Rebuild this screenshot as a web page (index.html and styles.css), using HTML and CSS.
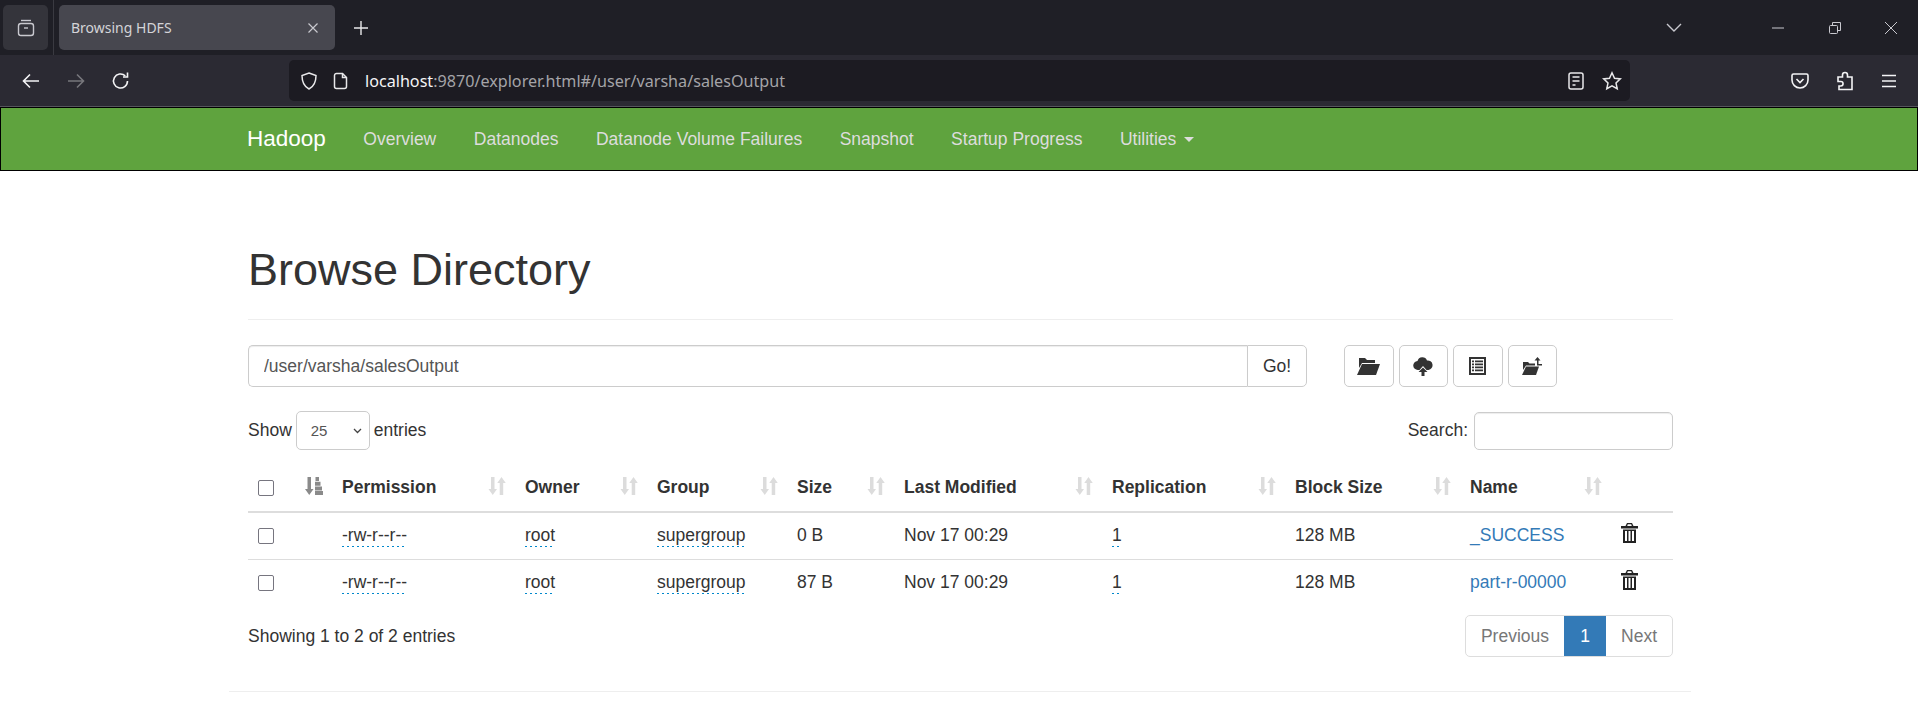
FILE: index.html
```html
<!DOCTYPE html>
<html lang="en">
<head>
<meta charset="UTF-8">
<title>Browsing HDFS</title>
<link rel="stylesheet" href="styles.css">
</head>
<body>
<div class="tabbar">
  <div class="view-btn">
    <svg width="20" height="20" viewBox="0 0 20 20" fill="none" stroke="#c9c9cf" stroke-width="1.4"><path d="M5 2.500h10"/><rect x="2.500" y="5.500" width="15" height="12" rx="2.500"/><path d="M8 10h4"/></svg>
  </div>
  <div class="tab-sep"></div>
  <div class="tab">
    <span class="tab-title">Browsing HDFS</span>
    <svg width="12" height="12" viewBox="0 0 12 12" stroke="#c9c9cf" stroke-width="1.2"><path d="M1.500 1.500l9 9M10.500 1.500l-9 9"/></svg>
  </div>
  <svg class="new-tab" width="16" height="16" viewBox="0 0 16 16" stroke="#e8e8ea" stroke-width="1.4"><path d="M8 1v14M1 8h14"/></svg>
  <svg class="tab-list" width="16" height="10" viewBox="0 0 16 10" fill="none" stroke="#c9c9cf" stroke-width="1.4"><path d="M1 1l7 7 7-7"/></svg>
  <div class="win-btns">
    <svg width="14" height="14" viewBox="0 0 14 14" stroke="#c9c9cf"><path d="M1 7h12"/></svg>
    <svg width="14" height="14" viewBox="0 0 14 14" fill="none" stroke="#c9c9cf"><rect x="1.500" y="4.500" width="8" height="8" rx="1"/><path d="M4.500 4.500v-3h8v8h-3"/></svg>
    <svg width="14" height="14" viewBox="0 0 14 14" stroke="#c9c9cf"><path d="M1 1l12 12M13 1L1 13"/></svg>
  </div>
</div>

<div class="toolbar">
  <div class="nav-btns">
    <svg width="20" height="20" viewBox="0 0 20 20" fill="none" stroke="#f4f4f6" stroke-width="1.6"><path d="M18 10H3M9 3.500L2.500 10 9 16.500"/></svg>
    <svg width="20" height="20" viewBox="0 0 20 20" fill="none" stroke="#77777c" stroke-width="1.6"><path d="M2 10h15M11 3.500l6.500 6.500-6.500 6.500"/></svg>
    <svg width="20" height="20" viewBox="0 0 20 20" fill="none" stroke="#f4f4f6" stroke-width="1.6"><path d="M16.500 10a7 7 0 1 1-2.200-5.100"/><path d="M16.500 1.500v4.500H12"/></svg>
  </div>
  <div class="urlbar">
    <svg width="20" height="20" viewBox="0 0 20 20" fill="none" stroke="#e8e8ea" stroke-width="1.500"><path d="M10 2l7 2.500c0 6.500-2 11-7 13.500C5 15.500 3 11 3 4.500z"/></svg>
    <svg width="16" height="18" viewBox="0 0 16 18" fill="none" stroke="#e8e8ea" stroke-width="1.500"><path d="M3.500 1.500h6l4 4v9a2 2 0 0 1-2 2h-8a2 2 0 0 1-2-2v-11a2 2 0 0 1 2-2z"/><path d="M9.500 1.500v4h4"/></svg>
    <span class="url"><b>localhost</b>:9870/explorer.html#/user/varsha/salesOutput</span>
    <svg width="18" height="20" viewBox="0 0 18 20" fill="none" stroke="#e8e8ea" stroke-width="1.500"><rect x="2" y="2" width="14" height="16" rx="2"/><path d="M5.500 6h7M5.500 10h7M5.500 14h3"/></svg>
    <svg class="star" width="20" height="20" viewBox="0 0 20 20" fill="none" stroke="#e8e8ea" stroke-width="1.500"><path d="M10 1.800l2.500 5.400 5.800.7-4.300 4 1.200 5.800-5.200-2.900-5.200 2.900 1.200-5.800-4.300-4 5.800-.7z"/></svg>
  </div>
  <div class="ext-btns">
    <svg width="20" height="20" viewBox="0 0 20 20" fill="none" stroke="#f4f4f6" stroke-width="1.600"><path d="M3.500 3h13A1.500 1.500 0 0 1 18 4.500V9a8 8 0 0 1-16 0V4.500A1.500 1.500 0 0 1 3.500 3z"/><path d="M6.500 8l3.500 3.500L13.500 8"/></svg>
    <svg width="20" height="20" viewBox="0 0 20 20" fill="none" stroke="#f4f4f6" stroke-width="1.600"><path d="M3 6h4.500V4a2.500 2.500 0 0 1 5 0v2H17v12.500H4V15h1.800a2.200 2.200 0 0 0 0-4.500H3z"/></svg>
    <svg width="20" height="20" viewBox="0 0 20 20" stroke="#f4f4f6" stroke-width="1.600"><path d="M3 4.500h14M3 10h14M3 15.500h14"/></svg>
  </div>
</div>

<nav class="navbar">
  <a class="brand" href="#">Hadoop</a>
  <a href="#">Overview</a>
  <a href="#">Datanodes</a>
  <a href="#">Datanode Volume Failures</a>
  <a href="#">Snapshot</a>
  <a href="#">Startup Progress</a>
  <a href="#">Utilities <span class="caret"></span></a>
</nav>

<div class="container">
  <div class="page-header">
    <h1>Browse Directory</h1>
  </div>

  <div class="path-row">
    <div class="input-group">
      <input type="text" class="path-input" value="/user/varsha/salesOutput">
      <button class="btn go-btn">Go!</button>
    </div>
    <div class="tool-btns">
      <button class="btn icon-btn"><svg width="23" height="18" viewBox="0 0 23 18" fill="#333"><path d="M2 1h6l2 2h8v3H5L2 11z"/><path d="M5 7h18l-4 11H0z"/></svg></button>
      <button class="btn icon-btn"><svg width="20" height="19" viewBox="0 0 20 19" fill="#333"><path d="M6.500 13H5a4.500 4.500 0 0 1-.5-9A5 5 0 0 1 14 3.500 4.800 4.800 0 0 1 15.500 13h-2L10 9z"/><path d="M10 10.500l4.500 4.500h-3v4h-3v-4h-3z"/></svg></button>
      <button class="btn icon-btn"><svg width="17" height="18" viewBox="0 0 17 18" fill="#333"><path fill-rule="evenodd" d="M0 0h17v18H0zM2 2v14h13V2zM3 3.500h2v1.700H3zM6 3.500h8v1.700H6zM3 6.500h2v1.700H3zM6 6.500h8v1.700H6zM3 9.500h2v1.700H3zM6 9.500h8v1.700H6zM3 12.500h2v1.700H3zM6 12.500h8v1.700H6z"/></svg></button>
      <button class="btn icon-btn"><svg width="20" height="18" viewBox="0 0 20 18" fill="#333"><path d="M1 5h5l1.500 1.500H13v2H4L1 13z"/><path d="M4 9.500h13L14 18H0z"/><path d="M15.500 0l3 3.500h-2V7H20v1.500h-5V3.500h-2.500z"/></svg></button>
    </div>
  </div>

  <div class="dt-top">
    <label class="dt-length">Show
      <span class="select-box">25
        <svg width="9" height="6" viewBox="0 0 9 6" fill="none" stroke="#444" stroke-width="1.300"><path d="M1 1l3.500 3.500L8 1"/></svg>
      </span>
      entries</label>
    <label class="dt-search">Search: <input type="text" class="search-input"></label>
  </div>

  <table class="files">
    <colgroup>
      <col class="c-check"><col class="c-sort"><col class="c-perm"><col class="c-owner"><col class="c-group"><col class="c-size"><col class="c-date"><col class="c-repl"><col class="c-block"><col class="c-name"><col class="c-del">
    </colgroup>
    <thead>
      <tr>
        <th><span class="check"></span></th>
        <th class="sorted"><div class="th-in"><span></span>
          <svg width="18" height="18" viewBox="0 0 18 18" fill="#8a8a8a"><path d="M2.500 0H6v12h2.500l-4.250 6L0 12h2.500z"/><path d="M10.500 0h3.500v4h-3.500zM10 4.700h5.500v4H10zM10 9.400h7v4h-7zM10 14h8v4h-8z"/></svg></div></th>
        <th><div class="th-in">Permission <svg class="sort-ic"><use href="#sort"/></svg></div></th>
        <th><div class="th-in">Owner <svg class="sort-ic"><use href="#sort"/></svg></div></th>
        <th><div class="th-in">Group <svg class="sort-ic"><use href="#sort"/></svg></div></th>
        <th><div class="th-in">Size <svg class="sort-ic"><use href="#sort"/></svg></div></th>
        <th><div class="th-in">Last Modified <svg class="sort-ic"><use href="#sort"/></svg></div></th>
        <th><div class="th-in">Replication <svg class="sort-ic"><use href="#sort"/></svg></div></th>
        <th><div class="th-in">Block Size <svg class="sort-ic"><use href="#sort"/></svg></div></th>
        <th><div class="th-in">Name <svg class="sort-ic"><use href="#sort"/></svg></div></th>
        <th></th>
      </tr>
    </thead>
    <tbody>
      <tr>
        <td><span class="check"></span></td>
        <td></td>
        <td><a class="editable" href="#">-rw-r--r--</a></td>
        <td><a class="editable" href="#">root</a></td>
        <td><a class="editable" href="#">supergroup</a></td>
        <td>0 B</td>
        <td>Nov 17 00:29</td>
        <td><a class="editable" href="#">1</a></td>
        <td>128 MB</td>
        <td><a class="file-link" href="#">_SUCCESS</a></td>
        <td><svg class="trash"><use href="#trash"/></svg></td>
      </tr>
      <tr>
        <td><span class="check"></span></td>
        <td></td>
        <td><a class="editable" href="#">-rw-r--r--</a></td>
        <td><a class="editable" href="#">root</a></td>
        <td><a class="editable" href="#">supergroup</a></td>
        <td>87 B</td>
        <td>Nov 17 00:29</td>
        <td><a class="editable" href="#">1</a></td>
        <td>128 MB</td>
        <td><a class="file-link" href="#">part-r-00000</a></td>
        <td><svg class="trash"><use href="#trash"/></svg></td>
      </tr>
    </tbody>
  </table>

  <div class="dt-bottom">
    <div class="dt-info">Showing 1 to 2 of 2 entries</div>
    <div class="pagination">
      <a href="#">Previous</a>
      <a href="#" class="active">1</a>
      <a href="#">Next</a>
    </div>
  </div>
  <div class="page-end"></div>
</div>

<svg class="defs" width="0" height="0">
  <symbol id="sort" viewBox="0 0 18 18">
    <path d="M3 0h3.500v12H9l-4.250 6L.5 12H3z"/><path d="M13.500 0l4.250 6H15.200v12h-3.500V6H9.250z"/>
  </symbol>
  <symbol id="trash" viewBox="0 0 17 20">
    <path fill-rule="evenodd" d="M6 0h5l1.500 3H17v2.500H0V3h4.500zM6.800 1.300L6.200 3h4.600l-.6-1.700zM2 6.500h13V20H2zM4 8v10h2V8zM7.500 8v10h2V8zM11 8v10h2V8z"/>
  </symbol>
</svg>
</body>
</html>
```

FILE: styles.css
```css
/* Browser chrome */
* {
  box-sizing: border-box;
}
body {
  margin: 0;
  font-family: "Liberation Sans", Arial, sans-serif;
  font-size: 17.5px;
  color: #333;
  background-color: #fff;
  overflow: hidden;
}
a {
  text-decoration: none;
}
.tabbar {
  height: 55px;
  background-color: #1f1f26;
  display: flex;
  align-items: center;
  padding-left: 3px;
}
.view-btn {
  width: 45px;
  height: 45px;
  border-radius: 5px;
  background-color: #34343b;
  display: flex;
  align-items: center;
  justify-content: center;
}
.tab-sep {
  width: 1px;
  height: 55px;
  margin: 0 5px;
  background-color: #3a3a41;
}
.tab {
  width: 276px;
  height: 45px;
  padding: 0 16px 0 12px;
  border-radius: 5px;
  background-color: #47474f;
  display: flex;
  align-items: center;
  justify-content: space-between;
}
.tab-title {
  font-family: "Noto Sans", sans-serif;
  font-size: 14px;
  color: #d4d4d8;
}
.new-tab {
  margin-left: 18px;
}
.tab-list {
  margin-left: auto;
}
.win-btns {
  width: 147px;
  margin-left: 89px;
  padding-right: 20px;
  display: flex;
  justify-content: space-between;
}
.toolbar {
  height: 52px;
  background-color: #2b2a33;
  display: flex;
  align-items: center;
  border-bottom: 1px solid #55555c;
}
.nav-btns {
  width: 289px;
  padding: 0 0 0 21px;
  display: flex;
  gap: 25px;
}
.urlbar {
  width: 1341px;
  height: 41px;
  padding: 0 8px 0 10px;
  border-radius: 5px;
  background-color: #1c1b22;
  display: flex;
  align-items: center;
  gap: 14px;
}
.url {
  flex: 1;
  margin-left: 2px;
  font-family: "Noto Sans", sans-serif;
  font-size: 16.15px;
  color: #a4a4a8;
}
.url b {
  font-weight: normal;
  color: #f4f4f6;
}
.star {
  margin-left: 3px;
}
.ext-btns {
  flex: 1;
  padding: 0 19px 0 160px;
  display: flex;
  justify-content: space-between;
}

/* Hadoop page */
.navbar {
  height: 64px;
  padding-left: 246px;
  background-color: #5fa33e;
  border: 1px solid #000;
  display: flex;
  align-items: center;
}
.navbar a {
  margin-right: 37.5px;
  color: #ddd;
  font-size: 17.5px;
}
.navbar .brand {
  color: #fff;
  font-size: 22.5px;
}
.caret {
  display: inline-block;
  margin-left: 3px;
  vertical-align: middle;
  border-top: 5px solid #ddd;
  border-left: 5px solid transparent;
  border-right: 5px solid transparent;
}
.container {
  width: 1466px;
  margin: 0 auto;
  padding: 0 19px 0 22px;
}
.page-header {
  padding: 66px 0 16px;
  border-bottom: 1px solid #eee;
}
h1 {
  margin: 0;
  font-size: 45px;
  font-weight: 500;
  line-height: 66px;
  color: #333;
}
.path-row {
  margin-top: 25px;
  display: flex;
}
.input-group {
  width: 1059px;
  display: flex;
}
.path-input {
  flex: 1;
  height: 42px;
  padding: 0 15px;
  border: 1px solid #ccc;
  border-right: none;
  border-radius: 5px 0 0 5px;
  font-family: inherit;
  font-size: 17.5px;
  color: #555;
  box-shadow: inset 0 1px 1px rgba(0, 0, 0, .075);
}
.btn {
  height: 42px;
  border: 1px solid #ccc;
  border-radius: 5px;
  background-color: #fff;
  font-family: inherit;
  font-size: 17.5px;
  color: #333;
  display: flex;
  align-items: center;
  justify-content: center;
}
.go-btn {
  width: 60px;
  border-radius: 0 5px 5px 0;
}
.tool-btns {
  margin-left: 37px;
  display: flex;
  gap: 5px;
}
.icon-btn {
  width: 49.5px;
}
.dt-top {
  margin-top: 24px;
  height: 39px;
  display: flex;
  align-items: center;
  justify-content: space-between;
}
.dt-length {
  display: flex;
  align-items: center;
  gap: 4px;
}
.select-box {
  width: 74px;
  height: 39px;
  padding: 0 7px 0 14px;
  border: 1px solid #ccc;
  border-radius: 5px;
  font-size: 15px;
  color: #555;
  display: flex;
  align-items: center;
  justify-content: space-between;
}
.dt-search {
  display: flex;
  align-items: center;
  gap: 6px;
}
.search-input {
  width: 199px;
  height: 38px;
  border: 1px solid #ccc;
  border-radius: 5px;
  box-shadow: inset 0 1px 1px rgba(0, 0, 0, .075);
}
.files {
  width: 100%;
  margin-top: 14px;
  table-layout: fixed;
  border-collapse: collapse;
}
.c-check { width: 47px; }
.c-sort { width: 37px; }
.c-perm { width: 183px; }
.c-owner { width: 132px; }
.c-group { width: 140px; }
.c-size { width: 107px; }
.c-date { width: 208px; }
.c-repl { width: 183px; }
.c-block { width: 175px; }
.c-name { width: 151px; }
.c-del { width: 62px; }
.files th {
  height: 48px;
  padding: 0 9px 0 10px;
  border-bottom: 2px solid #ddd;
  text-align: left;
  color: #333;
}
.files td {
  height: 47px;
  padding: 0 9px 0 10px;
  border-bottom: 1px solid #ddd;
}
.files tbody tr:last-child td {
  border-bottom: none;
}
.th-in {
  display: flex;
  align-items: center;
  justify-content: space-between;
}
.sort-ic {
  width: 18px;
  height: 18px;
  margin-top: -3px;
  fill: #dcdcdc;
}
.sorted svg {
  margin-top: -3px;
}
.check {
  display: block;
  width: 16px;
  height: 16px;
  border: 1.5px solid #76757f;
  border-radius: 2px;
  background-color: #fff;
}
.editable {
  color: #333;
  padding-bottom: 2px;
  background: repeating-linear-gradient(90deg, #0088cc 0 2px, transparent 2px 5px) left bottom / 100% 1px no-repeat;
}
.file-link {
  color: #337ab7;
}
.trash {
  display: block;
  width: 17px;
  height: 20px;
  margin-top: -6px;
  fill: #222;
}
.dt-bottom {
  margin-top: 9px;
  display: flex;
  align-items: center;
  justify-content: space-between;
}
.pagination {
  height: 42px;
  display: flex;
  border: 1px solid #ddd;
  border-radius: 5px;
  overflow: hidden;
}
.pagination a {
  padding: 0 15px;
  color: #777;
  display: flex;
  align-items: center;
}
.pagination .active {
  width: 42px;
  justify-content: center;
  color: #fff;
  background-color: #337ab7;
}
.page-end {
  margin: 34px -18px 0 -19px;
  border-top: 1px solid #eee;
}
.defs {
  position: absolute;
}
```
